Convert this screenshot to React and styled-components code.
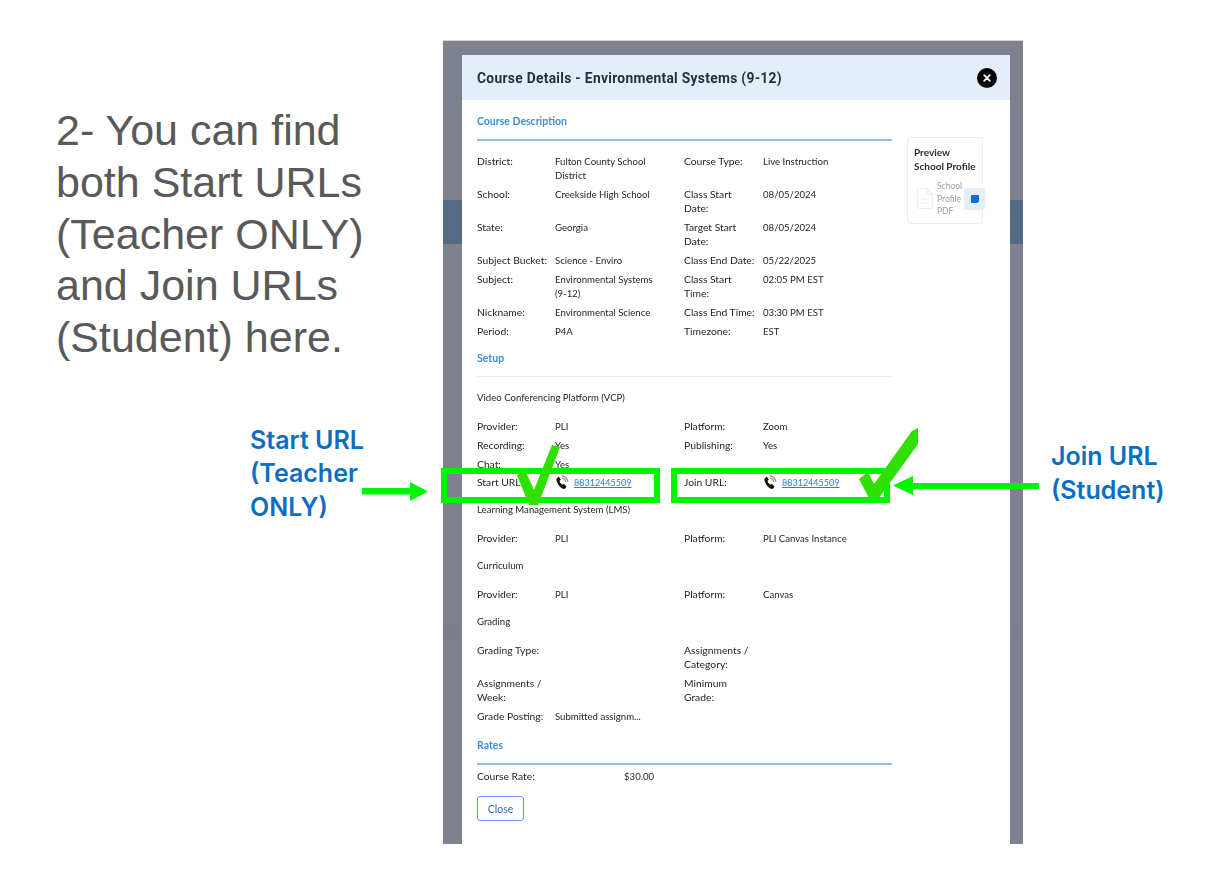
import styled, { createGlobalStyle } from 'styled-components';

const Global = createGlobalStyle`
    html, body {
        margin: 0;
        padding: 0;
        background: #fff;
    }
`;

const Slide = styled.div`
    position: relative;
    display: flex;
    width: 1222px;
    height: 883px;
    overflow: hidden;
    background: #fff;
    font-family: "Lato", "Liberation Sans", sans-serif;
`;

const LeftColumn = styled.div`
    width: 443px;
    flex: none;
    padding-top: 105px;
    box-sizing: border-box;
`;

const Intro = styled.p`
    margin: 0 0 0 56px;
    font-family: "Liberation Sans", Arial, sans-serif;
    font-size: 43px;
    line-height: 51.800px;
    color: #595959;
`;

const Callout = styled.div`
    font-family: "Inter", "Liberation Sans", sans-serif;
    font-weight: 600;
    font-size: 25px;
    line-height: 33.500px;
    color: #0a6fc2;
    margin-left: ${p => p.$left}px;
    margin-top: ${p => p.$top}px;
`;

const RightColumn = styled.div`
    flex: 1;
`;

const Backdrop = styled.div`
    width: 580px;
    flex: none;
    height: 804px;
    margin-top: 40px;
    padding: 14px 13px 0 19px;
    box-sizing: border-box;
    border-top: 1px solid #d4d5d8;
    background: linear-gradient(
        to bottom,
        #7e828e 0,
        #7e828e 45px,
        #7c818d 45px,
        #7c818d 159px,
        #556a85 159px,
        #556a85 203px,
        #7e828e 203px,
        #7e828e 582px,
        #7a7f8b 582px,
        #7a7f8b 599px,
        #7e828e 599px
    );
`;

const Modal = styled.div`
    height: 100%;
    background: #fff;
    overflow: hidden;
    filter: blur(0.6px);
`;

const ModalHeader = styled.div`
    display: flex;
    align-items: center;
    justify-content: space-between;
    height: 45px;
    padding: 0 13px 0 15px;
    background: #e3eef8;
`;

const ModalTitle = styled.div`
    font-family: "Roboto", sans-serif;
    font-weight: 700;
    font-size: 13.800px;
    letter-spacing: 0.300px;
    color: #25303c;
`;

const CloseDot = styled.div`
    width: 20px;
    height: 20px;
    border-radius: 50%;
    background: #050505;
    color: #fff;
    display: flex;
    align-items: center;
    justify-content: center;
`;

const ModalBody = styled.div`
    display: flex;
    gap: 15px;
    padding: 14px 0 0 15px;
`;

const Main = styled.div`
    width: 415px;
    flex: none;
`;

const SectionTitle = styled.div`
    font-weight: 700;
    font-size: 10.500px;
    line-height: 14px;
    color: #3c8ddc;
    padding-bottom: ${p => p.$pad}px;
    border-bottom: ${p => p.$thin ? '1px solid #eeeeee' : '2px solid #93bdec'};
    margin-top: ${p => p.$top || 0}px;
`;

const Grid = styled.div`
    display: grid;
    grid-template-columns: 78px 129px 79px 1fr;
    row-gap: 5px;
    margin-top: ${p => p.$top || 0}px;
`;

const Label = styled.div`
    font-size: 10.300px;
    line-height: 14px;
    color: #1f1f24;
    padding-right: 5px;
`;

const Value = styled.div`
    font-size: 9.600px;
    line-height: 14px;
    color: #26262c;
    min-height: 14px;
    padding: 1px 22px 0 0;
    margin-bottom: -1px;
`;

const SubHead = styled.div`
    font-size: 9.600px;
    line-height: 14px;
    color: #1f1f24;
    margin-top: ${p => p.$top}px;
`;

const UrlCell = styled.div`
    display: flex;
    align-items: center;
    gap: 4px;
    font-size: 9px;
    line-height: 14px;
`;

const UrlLink = styled.a`
    color: #2f7de1;
    text-decoration: underline;
`;

const RateRow = styled.div`
    display: grid;
    grid-template-columns: 147px 1fr;
    margin-top: 4px;
`;

const CloseButton = styled.button`
    display: block;
    width: 47px;
    height: 25px;
    margin-top: 13px;
    padding: 0;
    border: 1px solid #6f8fe0;
    border-radius: 3px;
    background: #fff;
    color: #3a63c8;
    font-family: inherit;
    font-size: 10.500px;
`;

const PreviewCard = styled.div`
    width: 76px;
    height: 87px;
    margin-top: 23px;
    box-sizing: border-box;
    padding: 7px 0 0 6px;
    border: 1.500px solid #eceef0;
    border-radius: 4px;
    background: #fff;
`;

const PreviewTitle = styled.div`
    font-weight: 700;
    font-size: 10px;
    line-height: 14px;
    color: #2a2f36;
`;

const PreviewFile = styled.div`
    display: flex;
    align-items: center;
    margin: 7px -4px 0 2px;
`;

const FileName = styled.div`
    width: 27px;
    margin-left: 3px;
    font-size: 8.500px;
    line-height: 12.500px;
    color: #9a9ea6;
`;

const FileAction = styled.div`
    width: 21px;
    height: 22px;
    flex: none;
    background: #e3eef8;
    border-radius: 2px;
    display: flex;
    align-items: center;
    justify-content: center;

    &::after {
        content: '';
        width: 8px;
        height: 8px;
        border-radius: 1px 1px 3px 1px;
        background: #1668d8;
    }
`;

const Marks = styled.svg`
    position: absolute;
    left: 0;
    top: 0;
    pointer-events: none;
`;

const PhoneIcon = () => (
    <svg width="15" height="15" viewBox="0 0 14 15">
        <path d="M1.200 3.200 3.400 1.800 5.200 4.800 4 6C4.400 7.600 5.600 9 7 9.800L8.300 8.800 11 11.400 9.600 13.400C8.400 14.400 6.400 13.800 4.600 11.800 2.200 9.200.400 5.600 1.200 3.200Z" fill="#0b0b0b" />
        <path d="M6 .800C9.200 1 11.800 3.600 12.400 6.800M6.200 3C8 3.200 9.800 5 10.200 6.800" fill="none" stroke="#8b8b8b" strokeWidth="1.200" />
    </svg>
);

const FileIcon = () => (
    <svg width="18" height="23" viewBox="0 0 18 23">
        <path d="M1.500 3.500A2 2 0 0 1 3.500 1.500H11L16.500 7V19.500A2 2 0 0 1 14.500 21.500H3.500A2 2 0 0 1 1.500 19.500Z M11 1.500V7H16.500 M5 12H13 M5 16H13" fill="none" stroke="#eceef0" strokeWidth="1.200" />
    </svg>
);

const XIcon = () => (
    <svg width="8" height="8" viewBox="0 0 8 8">
        <path d="M1.200 1.200 6.800 6.800M6.800 1.200 1.200 6.800" stroke="#fff" strokeWidth="1.800" strokeLinecap="round" />
    </svg>
);

const courseRows = [
    ['District:', 'Fulton County School District', 'Course Type:', 'Live Instruction'],
    ['School:', 'Creekside High School', 'Class Start Date:', '08/05/2024'],
    ['State:', 'Georgia', 'Target Start Date:', '08/05/2024'],
    ['Subject Bucket:', 'Science - Enviro', 'Class End Date:', '05/22/2025'],
    ['Subject:', 'Environmental Systems (9-12)', 'Class Start Time:', '02:05 PM EST'],
    ['Nickname:', 'Environmental Science', 'Class End Time:', '03:30 PM EST'],
    ['Period:', 'P4A', 'Timezone:', 'EST'],
];

const vcpRows = [
    ['Provider:', 'PLI', 'Platform:', 'Zoom'],
    ['Recording:', 'Yes', 'Publishing:', 'Yes'],
    ['Chat:', 'Yes', '', ''],
];

const gradingRows = [
    ['Grading Type:', '', 'Assignments / Category:', ''],
    ['Assignments / Week:', '', 'Minimum Grade:', ''],
    ['Grade Posting:', 'Submitted assignm...', '', ''],
];

const Rows = ({ rows, top }) => (
    <Grid $top={top}>
        {rows.map(row => row.map((cell, i) => (
            i % 2 === 0
                ? <Label key={row[0] + i}>{cell}</Label>
                : <Value key={row[0] + i}>{cell}</Value>
        )))}
    </Grid>
);

const UrlValue = () => (
    <UrlCell>
        <PhoneIcon />
        <UrlLink>88312445509</UrlLink>
    </UrlCell>
);

const App = () => {
    return (
    <Slide>
        <Global />
        <LeftColumn>
            <Intro>
                2- You can find<br />
                both Start URLs<br />
                (Teacher ONLY)<br />
                and Join URLs<br />
                (Student) here.
            </Intro>
            <Callout $left={250} $top={60}>Start URL<br />(Teacher<br />ONLY)</Callout>
        </LeftColumn>
        <Backdrop>
            <Modal>
                <ModalHeader>
                    <ModalTitle>Course Details - Environmental Systems (9-12)</ModalTitle>
                    <CloseDot><XIcon /></CloseDot>
                </ModalHeader>
                <ModalBody>
                    <Main>
                        <SectionTitle $pad={11}>Course Description</SectionTitle>
                        <Rows rows={courseRows} top={13} />
                        <SectionTitle $top={13} $pad={11} $thin>Setup</SectionTitle>
                        <SubHead $top={14}>Video Conferencing Platform (VCP)</SubHead>
                        <Rows rows={vcpRows} top={14} />
                        <Grid $top={4}>
                            <Label>Start URL:</Label>
                            <UrlValue />
                            <Label>Join URL:</Label>
                            <UrlValue />
                        </Grid>
                        <SubHead $top={13}>Learning Management System (LMS)</SubHead>
                        <Rows rows={[['Provider:', 'PLI', 'Platform:', 'PLI Canvas Instance']]} top={14} />
                        <SubHead $top={14}>Curriculum</SubHead>
                        <Rows rows={[['Provider:', 'PLI', 'Platform:', 'Canvas']]} top={14} />
                        <SubHead $top={14}>Grading</SubHead>
                        <Rows rows={gradingRows} top={14} />
                        <SectionTitle $top={15} $pad={11}>Rates</SectionTitle>
                        <RateRow>
                            <Label>Course Rate:</Label>
                            <Value>$30.00</Value>
                        </RateRow>
                        <CloseButton>Close</CloseButton>
                    </Main>
                    <PreviewCard>
                        <PreviewTitle>Preview<br />School Profile</PreviewTitle>
                        <PreviewFile>
                            <FileIcon />
                            <FileName>School Profile PDF</FileName>
                            <FileAction />
                        </PreviewFile>
                    </PreviewCard>
                </ModalBody>
            </Modal>
        </Backdrop>
        <RightColumn>
            <Callout $left={28} $top={440}>Join URL<br />(Student)</Callout>
        </RightColumn>
        <Marks width="1222" height="883" viewBox="0 0 1222 883">
            <path d="M444 471H657V500H444Z M674 471H887V500H674Z" fill="none" stroke="#00f500" strokeWidth="6" />
            <path d="M517 475 525 470 534 490 552 445 560 447 538 505 529 505Z" fill="#2fe000" />
            <path d="M859 479 868 472 874 484 912 431 918 428 918 444 879 498 869 498Z" fill="#2fe000" />
            <path d="M362 488H410V482L428 491.500 410 501V494.500H362Z" fill="#00f500" />
            <path d="M1039 483H913V476L893 485.500 913 495V489H1039Z" fill="#00f500" />
        </Marks>
    </Slide>
    );
};

export default App;
